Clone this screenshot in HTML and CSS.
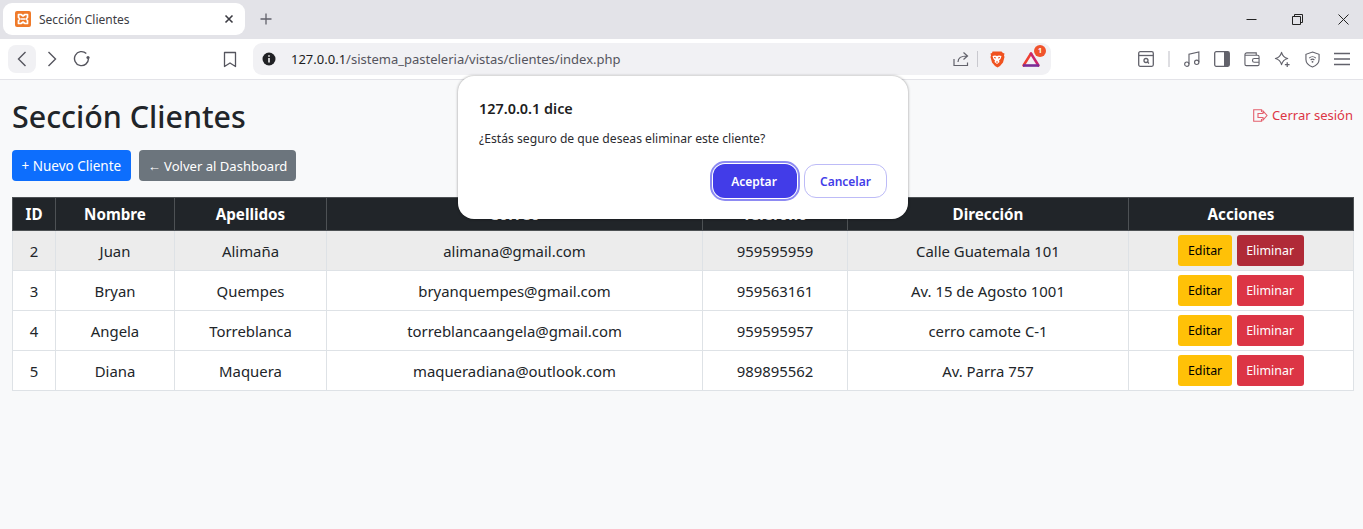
FILE: index.html
```html
<!DOCTYPE html>
<html lang="es">
<head>
    <meta charset="UTF-8">
    <meta name="viewport" content="width=device-width, initial-scale=1.0">
    <title>Sección Clientes</title>
    <link rel="stylesheet" href="styles.css">
</head>
<body>

    <!-- Barra de pestañas -->
    <div class="tabstrip">
        <div class="tab">
            <svg class="favicon" width="16" height="16" viewBox="0 0 16 16">
                <rect width="16" height="16" rx="2" fill="#ef7a2a"/>
                <path d="M3.500 3.500h2.500l2 1.500 2-1.500h2.500v3l-1.500 1.500 1.500 1.500v3h-2.500l-2-1.500-2 1.500h-2.500v-3l1.500-1.500-1.500-1.500z" fill="none" stroke="#fff" stroke-width="1.700" stroke-linejoin="round"/>
                <path d="M6 8h4" stroke="#fff" stroke-width="1.500"/>
            </svg>
            <span class="tab-title">Sección Clientes</span>
            <svg class="tab-close" width="10" height="10" viewBox="0 0 10 10">
                <path d="M1.500 1.500l7 7M8.500 1.500l-7 7" stroke="#3c3c43" stroke-width="1.600"/>
            </svg>
        </div>
        <svg class="new-tab" width="12" height="12" viewBox="0 0 12 12">
            <path d="M6 .5v11M.5 6h11" stroke="#62626b" stroke-width="1.300"/>
        </svg>
        <div class="window-controls">
            <svg width="11" height="11" viewBox="0 0 11 11"><path d="M.5 5.500h10" stroke="#222" stroke-width="1"/></svg>
            <svg width="11" height="11" viewBox="0 0 11 11"><path d="M.5 2.500h8v8h-8zM2.500 2.500v-2h8v8h-2" fill="none" stroke="#222" stroke-width="1"/></svg>
            <svg width="11" height="11" viewBox="0 0 11 11"><path d="M.5.500l10 10M10.500.500l-10 10" stroke="#222" stroke-width="1"/></svg>
        </div>
    </div>

    <!-- Barra de direcciones -->
    <div class="toolbar">
        <div class="nav-buttons">
            <span class="back-btn">
                <svg width="10" height="16" viewBox="0 0 10 16"><path d="M8.500 1l-7 7 7 7" fill="none" stroke="#55555e" stroke-width="1.400"/></svg>
            </span>
            <svg class="forward" width="10" height="16" viewBox="0 0 10 16"><path d="M1.500 1l7 7-7 7" fill="none" stroke="#55555e" stroke-width="1.400"/></svg>
            <svg class="reload" width="18" height="18" viewBox="0 0 18 18"><path d="M15.500 8.500a7 7 0 1 1-2.200-5" fill="none" stroke="#55555e" stroke-width="1.400"/><circle cx="15" cy="7.500" r="1.600" fill="#55555e"/></svg>
        </div>
        <svg class="bookmark" width="14" height="17" viewBox="0 0 14 17"><path d="M1.500 1.500h11v14l-5.500-3.500-5.500 3.500z" fill="none" stroke="#55555e" stroke-width="1.300" stroke-linejoin="round"/></svg>
        <div class="urlbar">
            <svg width="14" height="14" viewBox="0 0 14 14"><circle cx="7" cy="7" r="6.500" fill="#202124"/><path d="M7 6v4.500M7 3.200v1.500" stroke="#fff" stroke-width="1.500"/></svg>
            <span class="url"><span class="url-host">127.0.0.1</span>/sistema_pasteleria/vistas/clientes/index.php</span>
            <svg class="share" width="16" height="16" viewBox="0 0 16 16"><path d="M1 8v6.500h13.500v-3M5 11c0-4 3-6 9-6M10.500 1.500l4 3.500-4 3.500" fill="none" stroke="#62626b" stroke-width="1.200"/></svg>
            <span class="url-sep"></span>
            <svg class="brave" width="16" height="17" viewBox="0 0 16 17">
                <path d="M3.500 .5h9l1.500 1.500 1.500 .5-.5 2 .5 1.500-1.500 5.500-3 3.500-2.500 1.500-2.500-1.500-3-3.500-1.500-5.500 .5-1.500-.5-2 1.500-.5z" fill="#f0521f"/>
                <path d="M3.500 5l2.500-.5 2 .5 2-.5 2.500 .5-1 3-1.500 1.500 .5 1.500-2.500 2-2.500-2 .5-1.500-1.500-1.500z" fill="#fff"/>
                <path d="M5 6.500l2 .5M11 6.500l-2 .5M7 11h2" stroke="#f0521f" stroke-width="1"/>
            </svg>
            <span class="rewards">
                <svg width="18" height="15" viewBox="0 0 18 15">
                    <path d="M9 1.500l-7.500 12" fill="none" stroke="#ef3f32" stroke-width="2.500" stroke-linecap="round"/>
                    <path d="M9 1.500l7.500 12" fill="none" stroke="#c9256d" stroke-width="2.500" stroke-linecap="round"/>
                    <path d="M1 13.500h16" stroke="#7b2d96" stroke-width="2.600"/>
                </svg>
                <span class="rewards-badge">1</span>
            </span>
        </div>
        <div class="tools">
            <svg width="16" height="16" viewBox="0 0 16 16"><rect x=".7" y=".7" width="14.600" height="14.600" rx="1.500" fill="none" stroke="#62626b" stroke-width="1.300"/><path d="M1 4.500h14" stroke="#62626b" stroke-width="1.300"/><circle cx="8" cy="9.500" r="2" fill="none" stroke="#62626b" stroke-width="1.300"/><path d="M9.500 11l1.500 1.500" stroke="#62626b" stroke-width="1.300"/></svg>
            <span class="tool-sep"></span>
            <svg width="16" height="16" viewBox="0 0 17 17"><circle cx="3" cy="14" r="2.300" fill="none" stroke="#62626b" stroke-width="1.200"/><circle cx="13.500" cy="12" r="2.300" fill="none" stroke="#62626b" stroke-width="1.200"/><path d="M5.300 14v-10.500l10.500-2.500v11" fill="none" stroke="#62626b" stroke-width="1.200"/></svg>
            <svg width="16" height="16" viewBox="0 0 16 16"><rect x=".7" y=".7" width="14.600" height="14.600" rx="1.500" fill="none" stroke="#62626b" stroke-width="1.300"/><rect x="10" y="1" width="5" height="14" fill="#62626b"/></svg>
            <svg width="16" height="16" viewBox="0 0 17 16"><path d="M1 4h13.500a1.500 1.500 0 0 1 1.500 1.500v8a1.500 1.500 0 0 1-1.500 1.500h-12a1.500 1.500 0 0 1-1.500-1.500v-10a2 2 0 0 1 2-2h10v2.500M16 7.500h-5a2 2 0 0 0 0 4h5" fill="none" stroke="#62626b" stroke-width="1.200"/></svg>
            <svg width="17" height="17" viewBox="0 0 18 18"><path d="M8 1.500c1 4 2.500 5.500 6.500 6.500-4 1-5.500 2.500-6.500 6.500-1-4-2.500-5.500-6.500-6.500 4-1 5.500-2.500 6.500-6.500z" fill="none" stroke="#62626b" stroke-width="1.200" stroke-linejoin="round"/><path d="M14 12v5M11.500 14.500h5" stroke="#62626b" stroke-width="1.300"/></svg>
            <svg width="15" height="17" viewBox="0 0 16 18"><path d="M8 1l7 2.500v5.500c0 4-3 6.500-7 8-4-1.500-7-4-7-8v-5.500z" fill="none" stroke="#62626b" stroke-width="1.200"/><path d="M4.500 7.500a5 5 0 0 1 7 0M6 9.500a3 3 0 0 1 4 0" fill="none" stroke="#62626b" stroke-width="1.200"/><circle cx="8" cy="11.500" r="1" fill="#62626b"/></svg>
            <svg width="16" height="14" viewBox="0 0 16 14"><path d="M0 1.500h16M0 7h16M0 12.500h16" stroke="#62626b" stroke-width="1.300"/></svg>
        </div>
    </div>

    <!-- Contenido de la pagina -->
    <main class="page">
        <div class="page-head">
            <h1>Sección Clientes</h1>
            <a class="logout" href="#">
                <svg width="15" height="13" viewBox="0 0 15 13"><path d="M8.500 3v-2.300h-7.800v11.600h7.800v-2.300M5 4.500h5v-2.500l4 4.500-4 4.500v-2.500h-5z" fill="none" stroke="#e4606d" stroke-width="1.100"/></svg>
                Cerrar sesión
            </a>
        </div>

        <div class="actions">
            <a class="btn btn-blue" href="#">+ Nuevo Cliente</a>
            <a class="btn btn-gray" href="#">← Volver al Dashboard</a>
        </div>

        <table class="clientes">
            <colgroup>
                <col class="c-id"><col class="c-nombre"><col class="c-apellidos"><col class="c-correo"><col class="c-telefono"><col class="c-direccion"><col class="c-acciones">
            </colgroup>
            <thead>
                <tr>
                    <th>ID</th><th>Nombre</th><th>Apellidos</th><th>Correo</th><th>Teléfono</th><th>Dirección</th><th>Acciones</th>
                </tr>
            </thead>
            <tbody>
                <tr class="row-hover">
                    <td>2</td><td>Juan</td><td>Alimaña</td><td>alimana@gmail.com</td><td>959595959</td><td>Calle Guatemala 101</td>
                    <td><a class="btn-sm btn-yellow" href="#">Editar</a><a class="btn-sm btn-red active" href="#">Eliminar</a></td>
                </tr>
                <tr>
                    <td>3</td><td>Bryan</td><td>Quempes</td><td>bryanquempes@gmail.com</td><td>959563161</td><td>Av. 15 de Agosto 1001</td>
                    <td><a class="btn-sm btn-yellow" href="#">Editar</a><a class="btn-sm btn-red" href="#">Eliminar</a></td>
                </tr>
                <tr>
                    <td>4</td><td>Angela</td><td>Torreblanca</td><td>torreblancaangela@gmail.com</td><td>959595957</td><td>cerro camote C-1</td>
                    <td><a class="btn-sm btn-yellow" href="#">Editar</a><a class="btn-sm btn-red" href="#">Eliminar</a></td>
                </tr>
                <tr>
                    <td>5</td><td>Diana</td><td>Maquera</td><td>maqueradiana@outlook.com</td><td>989895562</td><td>Av. Parra 757</td>
                    <td><a class="btn-sm btn-yellow" href="#">Editar</a><a class="btn-sm btn-red" href="#">Eliminar</a></td>
                </tr>
            </tbody>
        </table>
    </main>

    <!-- Dialogo de confirmacion -->
    <div class="dialog">
        <div class="dialog-title">127.0.0.1 dice</div>
        <p class="dialog-text">¿Estás seguro de que deseas eliminar este cliente?</p>
        <div class="dialog-buttons">
            <button class="btn-accept">Aceptar</button>
            <button class="btn-cancel">Cancelar</button>
        </div>
    </div>

</body>
</html>
```

FILE: styles.css
```css
* {
    box-sizing: border-box;
}
html, body {
    height: 100%;
}
body {
    margin: 0;
    background-color: #f8f9fa;
    font-family: "Noto Sans", Arial, sans-serif;
    color: #212529;
    overflow: hidden;
}
svg {
    display: block;
    flex: none;
}

/* barra de pestañas */
.tabstrip {
    display: flex;
    align-items: center;
    height: 39px;
    padding: 3px 0 4px 3px;
    background-color: #e3e3e8;
}
.tab {
    display: flex;
    align-items: center;
    width: 242px;
    height: 32px;
    padding: 0 11px 0 12px;
    background-color: #fff;
    border-radius: 9px;
}
.tab-title {
    flex: 1;
    margin-left: 8px;
    font-size: 12px;
    color: #3c3c43;
}
.new-tab {
    margin-left: 15px;
}
.window-controls {
    display: flex;
    gap: 35px;
    margin-left: auto;
    padding-right: 14px;
}

/* barra de direcciones */
.toolbar {
    display: flex;
    align-items: center;
    height: 41px;
    padding-left: 8px;
    background-color: #fff;
    border-bottom: 1px solid #e3e3e8;
}
.nav-buttons {
    display: flex;
    align-items: center;
}
.back-btn {
    display: flex;
    align-items: center;
    justify-content: center;
    width: 28px;
    height: 28px;
    background-color: #f1f1f4;
    border-radius: 8px;
}
.forward {
    margin-left: 11px;
}
.reload {
    margin-left: 16px;
}
.bookmark {
    margin-left: 132px;
}
.urlbar {
    display: flex;
    align-items: center;
    width: 798px;
    height: 32px;
    margin-left: 16px;
    padding: 0 10px 0 9px;
    background-color: #f1f1f4;
    border-radius: 9px;
}
.url {
    flex: 1;
    margin-left: 15px;
    font-size: 13px;
    color: #55555e;
}
.url-host {
    color: #1d1d22;
}
.share {
    margin-right: 8px;
}
.url-sep {
    width: 1px;
    height: 16px;
    margin-right: 11px;
    background-color: #c9c9cf;
}
.rewards {
    position: relative;
    margin-left: 17px;
    margin-right: 1px;
}
.rewards-badge {
    position: absolute;
    top: -7px;
    right: -6px;
    width: 12px;
    height: 12px;
    background-color: #f0532b;
    border-radius: 50%;
    color: #fff;
    font-size: 7px;
    font-weight: 700;
    line-height: 12px;
    text-align: center;
}
.tools {
    display: flex;
    align-items: center;
    gap: 14px;
    margin-left: 87px;
}
.tool-sep {
    width: 2px;
    height: 16px;
    background-color: #dedee2;
}

/* contenido */
.page {
    padding: 0 10px 0 12px;
}
.page-head {
    display: flex;
    align-items: center;
    justify-content: space-between;
    height: 70px;
}
h1 {
    margin: 4px 0 0;
    font-size: 30.400px;
    font-weight: 500;
    line-height: 36px;
}
.logout {
    display: flex;
    align-items: center;
    gap: 4px;
    font-size: 13px;
    color: #dc3545;
    text-decoration: none;
}
.actions {
    display: flex;
    gap: 8px;
    margin-bottom: 16px;
}
.btn {
    display: block;
    height: 31px;
    padding: 0 9px;
    border-radius: 4px;
    color: #fff;
    line-height: 32px;
    text-decoration: none;
}
.btn-blue {
    padding: 0 9.500px;
    background-color: #0d6efd;
    font-size: 13.500px;
}
.btn-gray {
    background-color: #6c757d;
    font-size: 13.050px;
}

/* tabla */
.clientes {
    width: 1341px;
    border-collapse: collapse;
    table-layout: fixed;
    font-size: 14.900px;
}
.c-id { width: 43px; }
.c-nombre { width: 119px; }
.c-apellidos { width: 152px; }
.c-correo { width: 376px; }
.c-telefono { width: 145px; }
.c-direccion { width: 281px; }
.c-acciones { width: 225px; }

.clientes th {
    height: 33px;
    padding: 0 0 1px;
    background-color: #212529;
    border: 1px solid #4d5154;
    color: #fff;
    font-size: 15.200px;
    font-weight: 700;
    text-align: center;
}
.clientes td {
    height: 40px;
    padding: 0;
    background-color: #fff;
    border: 1px solid #dee2e6;
    color: #212529;
    text-align: center;
}
.clientes .row-hover td {
    background-color: #ececec;
}
.btn-sm {
    display: inline-block;
    height: 31px;
    padding: 0 9.500px;
    border-radius: 3px;
    font-size: 12.400px;
    line-height: 32px;
    text-decoration: none;
    vertical-align: middle;
}
.btn-yellow {
    margin-right: 5px;
    background-color: #ffc107;
    color: #000;
}
.btn-red {
    background-color: #dc3545;
    color: #fff;
}
.btn-red.active {
    background-color: #b02a37;
}

/* dialogo */
.dialog {
    position: absolute;
    top: 76px;
    left: 458px;
    width: 450px;
    height: 143px;
    padding: 24px 21px 0;
    background-color: #fff;
    border-radius: 16px;
    box-shadow: 0 0 3px rgba(0, 0, 0, 0.4);
}
.dialog-title {
    font-size: 14.400px;
    font-weight: 600;
    line-height: 18px;
    color: #1d1d22;
}
.dialog-text {
    margin: 13px 0 0;
    font-size: 12.150px;
    line-height: 16px;
    color: #2b2b30;
}
.dialog-buttons {
    display: flex;
    justify-content: flex-end;
    gap: 7px;
    margin-top: 17px;
}
.dialog-buttons button {
    height: 34px;
    border-radius: 12px;
    font-family: inherit;
    font-size: 12px;
    font-weight: 600;
}
.btn-accept {
    width: 84px;
    padding: 0 2px 0 0;
    background-color: #423ce8;
    border: 0;
    color: #fff;
    outline: 2px solid #8d8af2;
    outline-offset: 1px;
}
.btn-cancel {
    width: 83px;
    padding: 0;
    background-color: #fff;
    border: 1px solid #bdbbf7;
    color: #423ce8;
}
```
